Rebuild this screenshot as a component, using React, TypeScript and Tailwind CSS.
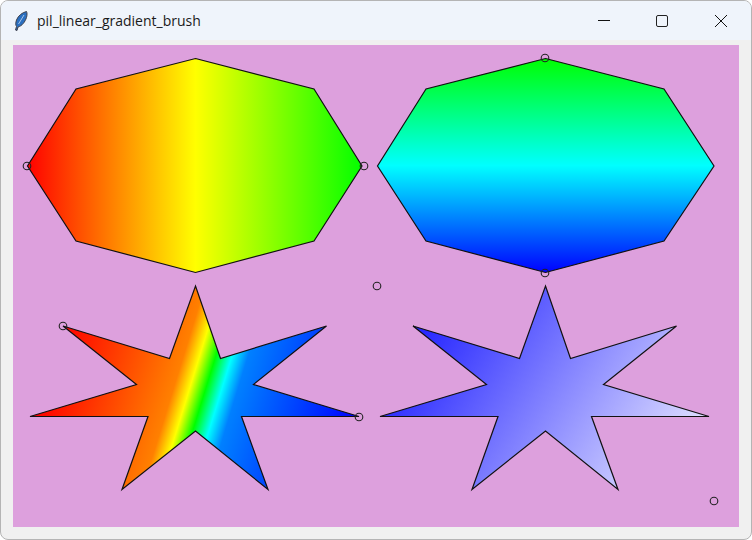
const SHAPE_ONE = '195.5,58.5 314,89 362,166 314,241 195.5,272.5 76,241 27.5,166 76,89';
const SHAPE_TWO = '545.5,58.5 664,89 714,166 664,241 545.5,272.5 426,241 377.5,166 426,89';
const STAR_ONE = '195.5,286 220.5,358.5 326.500,326 253.500,384.500 359,416.500 241.500,416.500 268,489.500 195.500,431 122,489.500 148,416.500 30,416.500 136.500,384.500 63,326 169.500,358.500';
const STAR_TWO = '545.5,286 570.5,358.5 676.500,326 603.500,384.500 709,416.500 591.500,416.500 618,489.500 545.500,431 472,489.500 498,416.500 380,416.500 486.500,384.500 413,326 519.500,358.500';

const HANDLES = [
  [27, 166],
  [364, 166],
  [545, 58],
  [545, 273],
  [63, 326],
  [359, 417],
  [377, 286],
  [714, 501],
];

export default function App() {
  return (
    <div className="w-[752px] h-[540px] bg-white overflow-hidden">
      <div className="w-full h-full flex flex-col bg-[#f0f0f0] border border-[#b4b4b4] rounded-lg overflow-hidden">
        {/* title bar */}
        <div className="h-[39px] shrink-0 flex items-center bg-[#eff4fb] font-['Segoe_UI','Open_Sans','Liberation_Sans',sans-serif] text-[14px] text-[#1a1a1a]">
          <svg width="14" height="20" viewBox="0 0 14 20" className="ml-[13px] mr-[9px]">
            <path d="M12.500 0.500 C8 1.500 4 5 2.500 9 C1.500 12 1.500 14 2.500 15.500 L1.500 19 L3 19.500 L4 16 C8 15 11 11 12.500 6.500 C13.200 4 13.200 2 12.500 0.500 Z" fill="#2a6fc0" stroke="#40424c" strokeWidth="1" />
            <path d="M10 4 L4.500 13" stroke="#a9c6ea" strokeWidth="1" fill="none" />
          </svg>
          <span>pil_linear_gradient_brush</span>
          <div className="ml-auto flex items-center">
            <div className="w-[58px] h-[39px] flex items-center justify-center">
              <div className="w-[12px] h-px bg-[#111]" />
            </div>
            <div className="w-[58px] h-[39px] flex items-center justify-center">
              <div className="w-[12px] h-[12px] border border-[#222] rounded-[2px]" />
            </div>
            <div className="w-[60px] h-[39px] flex items-center justify-center">
              <svg width="14" height="14" viewBox="0 0 14 14">
                <path d="M1 1 L13 13 M13 1 L1 13" stroke="#111" strokeWidth="1" fill="none" />
              </svg>
            </div>
          </div>
        </div>
        {/* canvas */}
        <div className="ml-[12px] mt-[5px] w-[726px] h-[482px] bg-[#dda0dd]">
          <svg width="726" height="482" viewBox="13 45 726 482" className="block">
            <defs>
              <linearGradient id="g1" gradientUnits="userSpaceOnUse" x1="27" y1="166" x2="364" y2="166">
                <stop offset="0" stopColor="#ff0000" />
                <stop offset="0.5" stopColor="#ffff00" />
                <stop offset="1" stopColor="#00ff00" />
              </linearGradient>
              <linearGradient id="g2" gradientUnits="userSpaceOnUse" x1="545" y1="58" x2="545" y2="273">
                <stop offset="0" stopColor="#00ff00" />
                <stop offset="0.5" stopColor="#00ffff" />
                <stop offset="1" stopColor="#0000ff" />
              </linearGradient>
              <linearGradient id="g3" gradientUnits="userSpaceOnUse" x1="63" y1="326" x2="359" y2="417">
                <stop offset="0" stopColor="#ff0000" />
                <stop offset="0.4" stopColor="#ff8000" />
                <stop offset="0.45" stopColor="#ffff00" />
                <stop offset="0.5" stopColor="#00ff00" />
                <stop offset="0.55" stopColor="#00ffff" />
                <stop offset="0.6" stopColor="#0080ff" />
                <stop offset="1" stopColor="#0000ff" />
              </linearGradient>
              <linearGradient id="g4" gradientUnits="userSpaceOnUse" x1="377" y1="286" x2="714" y2="501">
                <stop offset="0" stopColor="#0000ff" />
                <stop offset="1" stopColor="#ffffff" />
              </linearGradient>
            </defs>
            <polygon points={SHAPE_ONE} fill="url(#g1)" stroke="#111" strokeWidth="1.2" />
            <polygon points={SHAPE_TWO} fill="url(#g2)" stroke="#111" strokeWidth="1.2" />
            <polygon points={STAR_ONE} fill="url(#g3)" stroke="#111" strokeWidth="1.2" />
            <polygon points={STAR_TWO} fill="url(#g4)" stroke="#111" strokeWidth="1.2" />
            {HANDLES.map(([x, y]) => (
              <circle key={`${x}-${y}`} cx={x} cy={y} r="3.8" fill="none" stroke="#222" strokeWidth="1.1" />
            ))}
          </svg>
        </div>
      </div>
    </div>
  );
}
